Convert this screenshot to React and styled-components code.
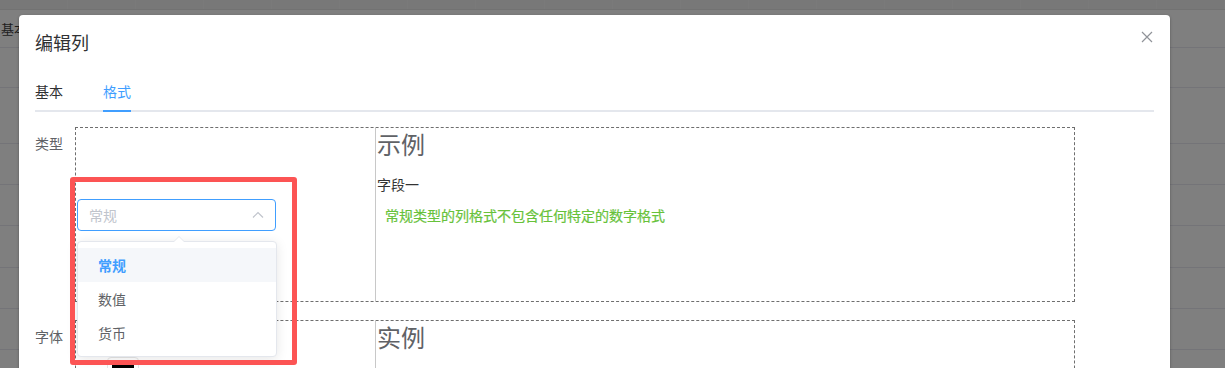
import React from "react";
import styled, { createGlobalStyle } from "styled-components";

const Global = createGlobalStyle`
  html, body { margin: 0; padding: 0; }
  body {
    width: 1225px; height: 368px; overflow: hidden;
    font-family: "Noto Sans CJK SC", "Noto Sans", "Liberation Sans", sans-serif;
    background: #7f7f7f;
  }
  * { box-sizing: border-box; }
`;

const Page = styled.div`
  position: relative;
  width: 1225px;
  height: 368px;
  overflow: hidden;
  background: #7f7f7f;
`;

const BgTable = styled.div`
  display: flex;
  flex-direction: column;
`;

const BgHead = styled.div`
  height: 10px;
  background: #787878;
  border-bottom: 1px solid #727272;
  display: flex;
`;

const BgHeadCell = styled.div`
  width: 69px;
  border-right: 1px solid #7a7a7a;
`;

const BgRow = styled.div`
  height: ${(p) => p.$h}px;
  border-bottom: 1px solid #747478;
  display: flex;
  align-items: center;
  font-size: 13px;
  color: #1d1d1d;
  padding-left: 1px;
`;

const Dialog = styled.div`
  position: absolute;
  top: 15px;
  left: 19px;
  width: 1151px;
  height: 400px;
  background: #fff;
  border-radius: 4px;
  box-shadow: 0 1px 3px rgba(0, 0, 0, 0.3);
`;

const Header = styled.div`
  position: relative;
  padding: 15px 16px 0;
`;

const Title = styled.div`
  font-size: 18px;
  line-height: 24px;
  color: #303133;
`;

const CloseBtn = styled.div`
  position: absolute;
  top: 16px;
  right: 17px;
  width: 12px;
  height: 12px;
  display: flex;
`;

const Body = styled.div`
  padding: 18px 16px 0;
`;

const TabBar = styled.div`
  display: flex;
  height: 40px;
  border-bottom: 2px solid #e4e7ed;
  margin-bottom: 15px;
`;

const Tab = styled.div`
  position: relative;
  padding: 0 20px;
  &:first-child { padding-left: 0; }
  line-height: 38px;
  font-size: 14px;
  color: ${(p) => (p.$active ? "#409eff" : "#303133")};
  ${(p) =>
    p.$active &&
    `&::after {
      content: "";
      position: absolute;
      left: 20px; right: 20px; bottom: -2px;
      height: 2px;
      background: #409eff;
    }`}
`;

const FormItem = styled.div`
  display: flex;
  margin-bottom: 18px;
`;

const Label = styled.div`
  width: 40px;
  font-size: 14px;
  line-height: 32px;
  color: #606266;
`;

const FieldBox = styled.div`
  position: relative;
  width: 1000px;
  height: 175px;
  border: 1px dashed #6e6e6e;
  display: flex;
`;

const LeftCol = styled.div`
  width: 299px;
  display: flex;
  align-items: ${(p) => (p.$top ? "flex-start" : "center")};
  padding-left: ${(p) => (p.$top ? 31 : 1)}px;
  padding-top: ${(p) => (p.$top ? 36 : 0)}px;
`;

const RightCol = styled.div`
  flex: 1;
  border-left: 1px solid #c8c8c8;
  padding-left: 1px;
`;

const Heading = styled.div`
  font-size: 24px;
  line-height: 32px;
  color: #606266;
`;

const FieldName = styled.div`
  margin-top: 14px;
  font-size: 14px;
  line-height: 20px;
  color: #333;
`;

const Note = styled.div`
  margin-top: 11px;
  padding-left: 8px;
  font-size: 14px;
  line-height: 20px;
  color: #67c23a;
  -webkit-text-stroke: 0.2px #67c23a;
`;

const SelectWrap = styled.div`
  position: relative;
  width: 199px;
`;

const SelectInput = styled.div`
  height: 32px;
  border: 1px solid #409eff;
  border-radius: 4px;
  display: flex;
  align-items: center;
  justify-content: space-between;
  padding: 0 10px 0 11px;
  font-size: 14px;
  color: #c0c4cc;
`;

const Popper = styled.div`
  position: absolute;
  top: 42px;
  left: 0;
  width: 200px;
  background: #fff;
  border: 1px solid #e4e7ed;
  border-radius: 4px;
  box-shadow: 0 2px 12px 0 rgba(0, 0, 0, 0.1);
  padding: 6px 0;
  z-index: 5;
  &::before {
    content: "";
    position: absolute;
    top: -6px;
    left: 95px;
    width: 0; height: 0;
    border-left: 6px solid transparent;
    border-right: 6px solid transparent;
    border-bottom: 6px solid #e4e7ed;
  }
  &::after {
    content: "";
    position: absolute;
    top: -5px;
    left: 96px;
    width: 0; height: 0;
    border-left: 5px solid transparent;
    border-right: 5px solid transparent;
    border-bottom: 5px solid #fff;
  }
`;

const Option = styled.div`
  height: 34px;
  line-height: 34px;
  padding: 0 20px;
  font-size: 14px;
  color: ${(p) => (p.$selected ? "#409eff" : "#606266")};
  font-weight: ${(p) => (p.$selected ? 700 : 400)};
  background: ${(p) => (p.$selected ? "#f5f7fa" : "transparent")};
`;

const ColorPicker = styled.div`
  width: 32px;
  height: 32px;
  border: 1px solid #e6e6e6;
  border-radius: 4px;
  padding: 5px 4px;
`;

const Swatch = styled.div`
  width: 100%;
  height: 100%;
  background: #000;
`;

const Highlight = styled.div`
  position: absolute;
  left: 51px;
  top: 162px;
  width: 227px;
  height: 188px;
  border: 5px solid #fc5454;
  border-radius: 3px;
  z-index: 6;
  pointer-events: none;
`;

const rows = [38, 40, 56, 41, 41, 42, 41, 41, 41];

export default function App() {
  return (
    <Page>
      <Global />
      <BgTable>
        <BgHead>
          {Array.from({ length: 18 }).map((_, i) => (
            <BgHeadCell key={i} />
          ))}
        </BgHead>
        {rows.map((h, i) => (
          <BgRow key={i} $h={h}>
            {i === 0 ? "基本" : null}
          </BgRow>
        ))}
      </BgTable>

      <Dialog>
        <Header>
          <Title>编辑列</Title>
          <CloseBtn>
            <svg width="12" height="12" viewBox="0 0 12 12">
              <path d="M1 1 L11 11 M11 1 L1 11" stroke="#909399" strokeWidth="1.2" fill="none" />
            </svg>
          </CloseBtn>
        </Header>
        <Body>
          <TabBar>
            <Tab>基本</Tab>
            <Tab $active>格式</Tab>
          </TabBar>

          <FormItem>
            <Label>类型</Label>
            <FieldBox>
              <LeftCol>
                <SelectWrap>
                  <SelectInput>
                    <span>常规</span>
                    <svg width="14" height="14" viewBox="0 0 14 14">
                      <path d="M2 9.5 L7 4.5 L12 9.5" stroke="#c0c4cc" strokeWidth="1.2" fill="none" />
                    </svg>
                  </SelectInput>
                  <Popper>
                    <Option $selected>常规</Option>
                    <Option>数值</Option>
                    <Option>货币</Option>
                  </Popper>
                </SelectWrap>
              </LeftCol>
              <RightCol>
                <Heading>示例</Heading>
                <FieldName>字段一</FieldName>
                <Note>常规类型的列格式不包含任何特定的数字格式</Note>
              </RightCol>
            </FieldBox>
          </FormItem>

          <FormItem>
            <Label>字体</Label>
            <FieldBox>
              <LeftCol $top>
                <ColorPicker>
                  <Swatch />
                </ColorPicker>
              </LeftCol>
              <RightCol>
                <Heading>实例</Heading>
              </RightCol>
            </FieldBox>
          </FormItem>
        </Body>
        <Highlight />
      </Dialog>
    </Page>
  );
}
